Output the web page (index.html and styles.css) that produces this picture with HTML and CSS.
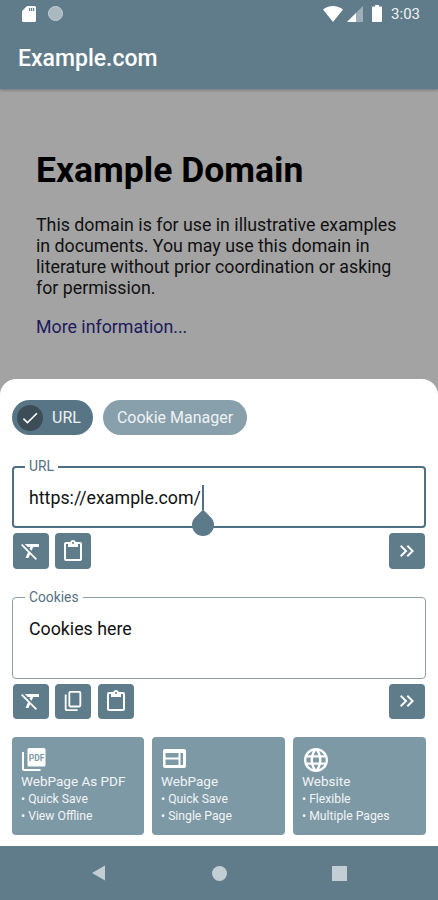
FILE: index.html
```html
<!DOCTYPE html>
<html lang="en">
<head>
  <meta charset="UTF-8">
  <title>Example.com</title>
  <link rel="stylesheet" href="styles.css">
</head>

<body>
  <div class="screen">
    <!-- Status bar + title -->
    <div class="top-bar">
      <div class="status-bar">
        <div class="status-left">
          <svg width="14" height="16" viewBox="0 0 14 16"><path fill="#fff" d="M5 0h7.5A1.5 1.5 0 0 1 14 1.5v13a1.5 1.5 0 0 1-1.5 1.5h-11A1.5 1.5 0 0 1 0 14.5V5zM7 2v3h1.2V2zm2 0v3h1.2V2zm2 0v3h1.2V2z"/></svg>
          <span class="status-dot"></span>
        </div>
        <div class="status-right">
          <svg width="20" height="16" viewBox="0 0 20 16"><path fill="#fff" d="M0 3.5C2.8 1.3 6.2 0 10 0s7.2 1.3 10 3.5L10 16z"/></svg>
          <svg class="signal" width="16" height="16" viewBox="0 0 16 16"><path fill="#fff" fill-opacity=".4" d="M16 0v16H0z"/><path fill="#fff" d="M9 7v9H0z"/></svg>
          <svg class="battery" width="10" height="17" viewBox="0 0 10 17"><path fill="#fff" d="M3 0h4v1.5h2a1 1 0 0 1 1 1V16a1 1 0 0 1-1 1H1a1 1 0 0 1-1-1V2.5a1 1 0 0 1 1-1h2z"/></svg>
          <span class="clock">3:03</span>
        </div>
      </div>
      <div class="app-title">Example.com</div>
    </div>

    <!-- Web page behind the sheet -->
    <div class="web-view">
      <h1>Example Domain</h1>
      <p>This domain is for use in illustrative examples in documents. You may use this domain in literature without prior coordination or asking for permission.</p>
      <a href="#">More information...</a>
    </div>

    <!-- Bottom sheet -->
    <div class="sheet">
      <div class="chip-row">
        <div class="chip chip-on">
          <span class="chip-check">
            <svg width="20" height="20" viewBox="0 0 24 24"><path fill="#fff" d="M9 16.2 4.8 12l-1.400 1.400L9 19 21 7l-1.400-1.400z"/></svg>
          </span>
          URL
        </div>
        <div class="chip chip-off">Cookie Manager</div>
      </div>

      <fieldset class="field field-focus">
        <legend>URL</legend>
        <div class="field-text">https://example.com/<span class="caret"></span></div>
        <span class="drop"></span>
      </fieldset>
      <div class="tool-row">
        <button class="tool">
          <svg width="24" height="24" viewBox="0 0 24 24"><path fill="#fff" d="M3.27 5 2 6.27l6.97 6.97L6.5 19h3l1.57-3.66L16.73 21 18 19.73 3.55 5.27zM6 5v.18L8.82 8h2.4l-.72 1.68 2.1 2.1L14.21 8H20V5z"/></svg>
        </button>
        <button class="tool">
          <svg width="24" height="24" viewBox="0 0 24 24"><path fill="#fff" d="M19 3h-4.2C14.4 1.800 13.300 1 12 1s-2.400.8-2.800 2H5a2 2 0 0 0-2 2v15a2 2 0 0 0 2 2h14a2 2 0 0 0 2-2V5a2 2 0 0 0-2-2zm-7 0a1 1 0 1 1 0 2 1 1 0 0 1 0-2zm7 17H5V5h2v3h10V5h2z"/></svg>
        </button>
        <button class="tool tool-next">
          <svg width="24" height="24" viewBox="0 0 24 24"><path fill="#fff" d="M6.4 6 5 7.4 9.6 12 5 16.6 6.4 18l6-6zM13 6l-1.400 1.400 4.600 4.600-4.600 4.600L13 18l6-6z"/></svg>
        </button>
      </div>

      <fieldset class="field field-cookies">
        <legend>Cookies</legend>
        <div class="field-text">Cookies here</div>
      </fieldset>
      <div class="tool-row">
        <button class="tool">
          <svg width="24" height="24" viewBox="0 0 24 24"><path fill="#fff" d="M3.27 5 2 6.27l6.97 6.97L6.5 19h3l1.57-3.66L16.73 21 18 19.73 3.55 5.27zM6 5v.18L8.82 8h2.4l-.72 1.68 2.1 2.1L14.21 8H20V5z"/></svg>
        </button>
        <button class="tool">
          <svg width="22" height="22" viewBox="0 0 24 24"><path fill="#fff" d="M9 1h10a2 2 0 0 1 2 2v14a2 2 0 0 1-2 2H9a2 2 0 0 1-2-2V3a2 2 0 0 1 2-2zm0 2v14h10V3zM3 5h2v16h12v2H5a2 2 0 0 1-2-2z"/></svg>
        </button>
        <button class="tool">
          <svg width="24" height="24" viewBox="0 0 24 24"><path fill="#fff" d="M19 3h-4.2C14.4 1.800 13.300 1 12 1s-2.400.8-2.800 2H5a2 2 0 0 0-2 2v15a2 2 0 0 0 2 2h14a2 2 0 0 0 2-2V5a2 2 0 0 0-2-2zm-7 0a1 1 0 1 1 0 2 1 1 0 0 1 0-2zm7 17H5V5h2v3h10V5h2z"/></svg>
        </button>
        <button class="tool tool-next">
          <svg width="24" height="24" viewBox="0 0 24 24"><path fill="#fff" d="M6.4 6 5 7.4 9.6 12 5 16.6 6.4 18l6-6zM13 6l-1.400 1.400 4.600 4.600-4.600 4.600L13 18l6-6z"/></svg>
        </button>
      </div>

      <div class="save-cards">
        <div class="save-card">
          <svg class="card-icon card-icon-pdf" width="24" height="24" viewBox="0 0 24 24">
            <path fill="#fff" d="M7 0h15a1.500 1.500 0 0 1 1.500 1.500V17a1.500 1.500 0 0 1-1.500 1.500H7A1.500 1.500 0 0 1 5.500 17V1.500A1.500 1.500 0 0 1 7 0z"/>
            <path fill="#fff" d="M0 4h2v17h16.500v2H2a2 2 0 0 1-2-2z"/>
            <text x="14.500" y="12.500" class="pdf-mark">PDF</text>
          </svg>
          <div class="card-title">WebPage As PDF</div>
          <div class="card-line">• Quick Save</div>
          <div class="card-line">• View Offline</div>
        </div>
        <div class="save-card">
          <svg class="card-icon" width="24" height="24" viewBox="0 0 24 24"><path fill="#fff" fill-rule="evenodd" d="M2 1h19a2 2 0 0 1 2 2v15a2 2 0 0 1-2 2H2a2 2 0 0 1-2-2V3a2 2 0 0 1 2-2zm.5 4v4.500h13V5zm0 6.500V17h13v-5.500zM17.500 5v12H20V5z"/></svg>
          <div class="card-title">WebPage</div>
          <div class="card-line">• Quick Save</div>
          <div class="card-line">• Single Page</div>
        </div>
        <div class="save-card">
          <svg class="card-icon" width="24" height="24" viewBox="2 2 20 20"><path fill="#fff" d="M11.99 2C6.47 2 2 6.48 2 12s4.47 10 9.99 10C17.52 22 22 17.52 22 12S17.52 2 11.99 2zm6.93 6h-2.950c-.32-1.250-.78-2.450-1.380-3.560 1.840.63 3.370 1.910 4.330 3.560zM12 4.040c.83 1.200 1.480 2.530 1.910 3.960h-3.820c.43-1.430 1.080-2.760 1.910-3.960zM4.260 14C4.100 13.360 4 12.690 4 12s.1-1.360.26-2h3.380c-.08.66-.14 1.320-.14 2 0 .68.06 1.340.14 2H4.260zm.82 2h2.950c.32 1.250.78 2.450 1.380 3.560-1.840-.63-3.370-1.900-4.330-3.560zm2.950-8H5.080c.96-1.660 2.490-2.930 4.330-3.560C8.810 5.550 8.350 6.750 8.030 8zM12 19.960c-.83-1.200-1.480-2.530-1.910-3.960h3.820c-.43 1.430-1.080 2.760-1.910 3.960zM14.340 14H9.660c-.09-.66-.16-1.320-.16-2 0-.68.07-1.350.16-2h4.680c.09.65.16 1.320.16 2 0 .68-.07 1.340-.16 2zm.25 5.560c.6-1.110 1.060-2.310 1.380-3.560h2.950c-.96 1.650-2.490 2.930-4.330 3.560zM16.360 14c.08-.66.14-1.320.14-2 0-.68-.06-1.340-.14-2h3.380c.16.64.26 1.310.26 2s-.1 1.360-.26 2h-3.380z"/></svg>
          <div class="card-title">Website</div>
          <div class="card-line">• Flexible</div>
          <div class="card-line">• Multiple Pages</div>
        </div>
      </div>
    </div>

    <!-- Nav bar -->
    <div class="nav-bar">
      <svg width="16" height="16" viewBox="0 0 16 16"><path fill="#c3ced4" d="M14 .5v15L1 8z"/></svg>
      <span class="nav-home"></span>
      <span class="nav-recent"></span>
    </div>
  </div>
</body>
</html>
```

FILE: styles.css
```css
* {
  box-sizing: border-box;
}

body {
  margin: 0;
  padding: 0;
  background-color: #ffffff;
  font-family: 'Roboto', sans-serif;
}

.screen {
  width: 438px;
  height: 900px;
  display: flex;
  flex-direction: column;
  overflow: hidden;
  background-color: #a3a3a4;
}

/* top bar */
.top-bar {
  height: 89px;
  background-color: #607b8a;
  color: white;
  box-shadow: 0 1px 3px rgba(0, 0, 0, 0.3);
  position: relative;
  flex-shrink: 0;
}

.status-bar {
  height: 27px;
  padding: 0 18px 0 22px;
  display: flex;
  justify-content: space-between;
  align-items: center;
}

.status-left,
.status-right {
  display: flex;
  align-items: center;
}

.status-dot {
  width: 15px;
  height: 15px;
  margin-left: 12px;
  border-radius: 50%;
  background-color: #aab8c0;
  border: 1px solid #c3ced4;
}

.signal {
  margin-left: 4px;
}

.battery {
  margin-left: 9px;
}

.clock {
  margin-left: 9px;
  font-size: 15px;
  color: #f0f3f5;
}

.app-title {
  padding: 19px 18px 0;
  font-size: 23px;
  font-weight: 500;
  line-height: 26px;
}

/* web page */
.web-view {
  height: 290px;
  padding: 0 36px;
  flex-shrink: 0;
  color: #111;
  font-size: 17.8px;
  line-height: 21px;
}

.web-view h1 {
  margin: 62px 0 0;
  font-size: 35.5px;
  line-height: 38px;
  font-weight: 700;
  color: #000;
}

.web-view p {
  margin: 25px 0 18px;
}

.web-view a {
  color: #1c1a5c;
  text-decoration: none;
}

/* bottom sheet */
.sheet {
  flex: 1;
  background-color: #ffffff;
  border-radius: 16px 16px 0 0;
  padding: 21px 12px 0;
}

.chip-row {
  display: flex;
  gap: 10px;
}

.chip {
  height: 35px;
  border-radius: 18px;
  display: flex;
  align-items: center;
  color: #eef2f4;
  font-size: 16px;
}

.chip-on {
  width: 81px;
  padding-left: 5px;
  background-color: #587585;
  gap: 9px;
}

.chip-check {
  width: 26px;
  height: 26px;
  border-radius: 50%;
  background-color: #3c4d58;
  display: flex;
  align-items: center;
  justify-content: center;
}

.chip-off {
  width: 144px;
  justify-content: center;
  background-color: #88a0ac;
}

.field {
  margin: 0;
  min-width: 0;
  border-radius: 4px;
  position: relative;
}

.field legend {
  padding: 0 4px;
  margin-left: -4px;
  font-size: 13.8px;
  line-height: 13px;
  color: #557183;
}

.field-focus {
  margin-top: 25px;
  height: 68px;
  padding: 0 15px;
  border: 2px solid #4f7082;
}

.field-cookies {
  margin-top: 22px;
  height: 88px;
  padding: 0 16px;
  border: 1px solid #8c9da7;
}

.field-text {
  margin-top: 12px;
  font-size: 17.8px;
  line-height: 26px;
  color: #111;
}

.caret {
  display: inline-block;
  width: 2px;
  height: 25px;
  margin-left: 1px;
  background-color: #4f7082;
  vertical-align: top;
}

/* text selection handle */
.drop {
  position: absolute;
  left: 178px;
  bottom: -10px;
  width: 22px;
  height: 22px;
  background-color: #5d7a8a;
  border-radius: 0 50% 50% 50%;
  transform: rotate(45deg);
}

.tool-row {
  display: flex;
  gap: 6.3px;
  margin-top: 5px;
  padding: 0 1px;
}

.tool {
  width: 36px;
  height: 35.5px;
  padding: 0;
  border: none;
  border-radius: 4px;
  background-color: #5f7c8b;
  display: flex;
  align-items: center;
  justify-content: center;
}

.tool-next {
  margin-left: auto;
}

/* save options */
.save-cards {
  margin-top: 18px;
  display: grid;
  grid-template-columns: 132px 133px 133px;
  gap: 8px;
}

.save-card {
  height: 98px;
  padding: 11px 9px 0;
  background-color: #7e99a6;
  border-radius: 4px;
  color: #f1f4f6;
}

.card-icon {
  display: block;
  margin-left: 2px;
}

.card-icon-pdf {
  margin-left: 1px;
}

.card-title {
  font-size: 13.5px;
  line-height: 19px;
}

.card-line {
  font-size: 12.2px;
  line-height: 17px;
}

.pdf-mark {
  font-family: 'Roboto', sans-serif;
  font-size: 8.5px;
  font-weight: 700;
  fill: #7e99a6;
  text-anchor: middle;
}

/* nav bar */
.nav-bar {
  height: 54px;
  flex-shrink: 0;
  background-color: #607b8a;
  display: flex;
  align-items: center;
  padding-left: 91px;
}

.nav-home {
  width: 15px;
  height: 15px;
  margin-left: 105px;
  border-radius: 50%;
  background-color: #c3ced4;
}

.nav-recent {
  width: 15px;
  height: 15px;
  margin-left: 105px;
  background-color: #c3ced4;
}
```
